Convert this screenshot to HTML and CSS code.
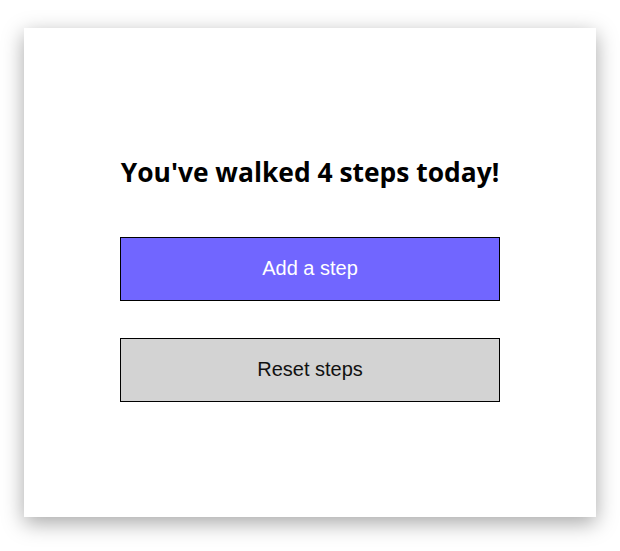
FILE: index.html
```html
<!DOCTYPE html>
<html>
<head>
<meta charset="utf-8">
<link rel="stylesheet" href="styles.css">
</head>
<body>
<div class="card">
  <h1 class="title">You've walked 4 steps today!</h1>
  <button class="btn btn-add">Add a step</button>
  <button class="btn btn-reset">Reset steps</button>
</div>
</body>
</html>
```
FILE: styles.css
```css
html, body {
  margin: 0;
  padding: 0;
  background: #fff;
}
body {
  padding: 28px 24px 34px 24px;
}
.card {
  width: 572px;
  height: 489px;
  box-sizing: border-box;
  background: #fff;
  box-shadow: 0 6px 20px rgba(0, 0, 0, 0.35);
  display: flex;
  flex-direction: column;
  align-items: center;
  padding-top: 127px;
}
.title {
  margin: 0;
  font-family: "Open Sans", "Noto Sans", sans-serif;
  font-weight: 700;
  font-size: 26.4px;
  line-height: 35px;
  color: #000;
}
.btn {
  width: 380px;
  height: 64px;
  border: 1px solid #000;
  font-family: "Liberation Sans", Arial, sans-serif;
  font-size: 20px;
  line-height: 22px;
  padding: 0 0 2px 0;
  cursor: pointer;
}
.btn-add {
  margin-top: 47px;
  background: #7166ff;
  color: #fff;
}
.btn-reset {
  margin-top: 37px;
  background: #d3d3d3;
  color: #111;
}
```
